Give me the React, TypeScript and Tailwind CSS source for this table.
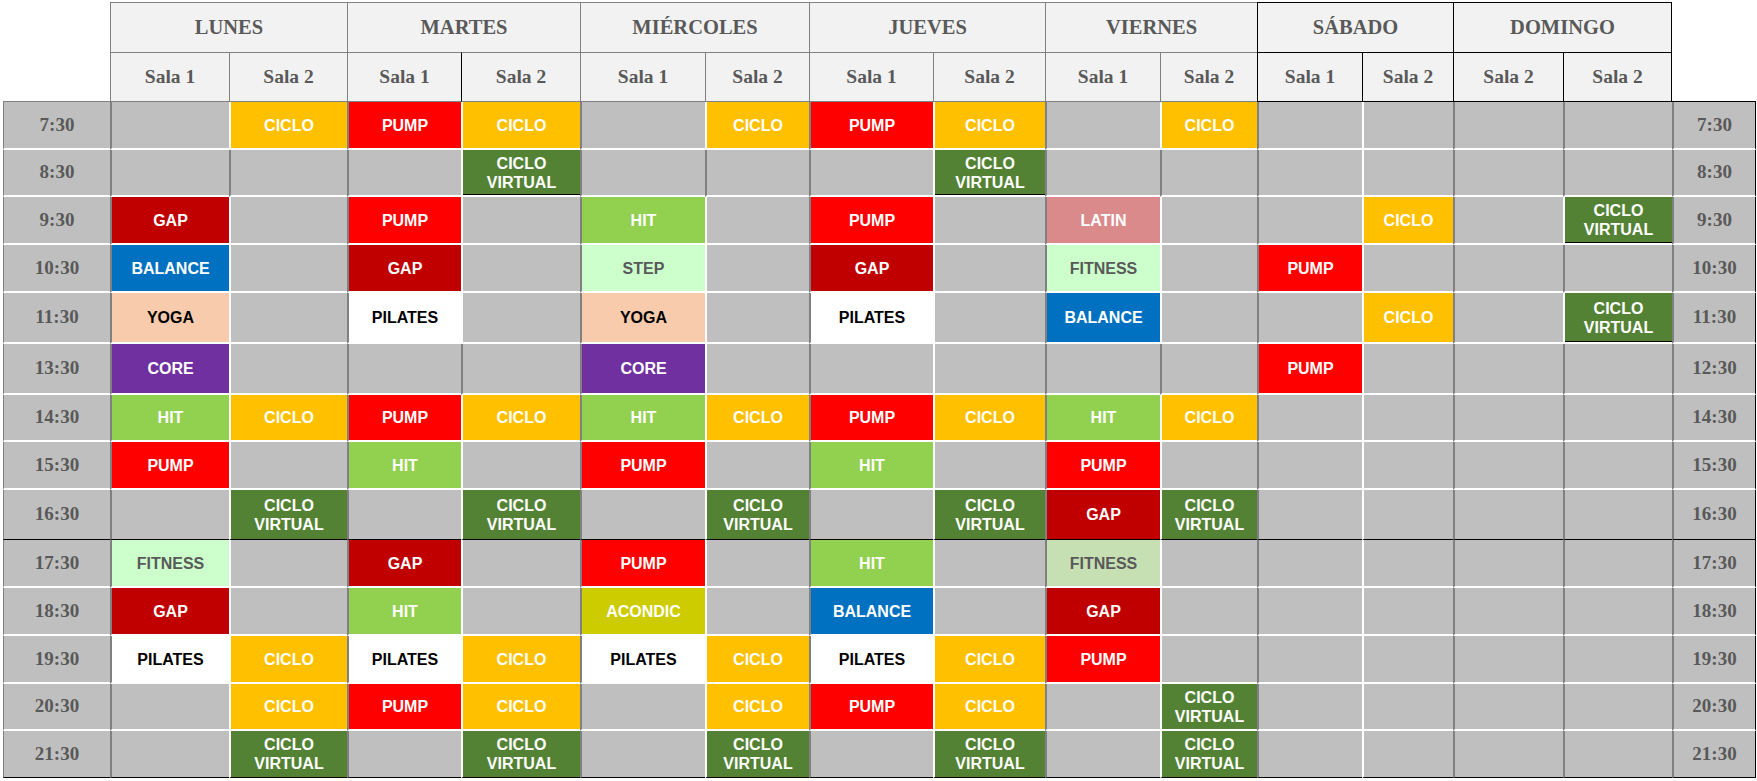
import React from "react";

type Day = { name: string; dark: boolean; salas: [string, string] };

const DAYS: Day[] = [
  { name: "LUNES", dark: false, salas: ["Sala 1", "Sala 2"] },
  { name: "MARTES", dark: false, salas: ["Sala 1", "Sala 2"] },
  { name: "MIÉRCOLES", dark: false, salas: ["Sala 1", "Sala 2"] },
  { name: "JUEVES", dark: false, salas: ["Sala 1", "Sala 2"] },
  { name: "VIERNES", dark: false, salas: ["Sala 1", "Sala 2"] },
  { name: "SÁBADO", dark: true, salas: ["Sala 1", "Sala 2"] },
  { name: "DOMINGO", dark: true, salas: ["Sala 2", "Sala 2"] },
];

const STYLES: Record<string, string> = {
  CICLO: "bg-[#ffc000] text-white",
  PUMP: "bg-[#ff0000] text-white",
  CV: "bg-[#548235] text-white",
  GAP: "bg-[#c00000] text-white",
  BALANCE: "bg-[#0070c0] text-white",
  YOGA: "bg-[#f8cbad] text-black",
  CORE: "bg-[#7030a0] text-white",
  HIT: "bg-[#92d050] text-white",
  STEP: "bg-[#ccffcc] text-[#595959]",
  FITNESS: "bg-[#ccffcc] text-[#595959]",
  FITNESS2: "bg-[#c6e0b4] text-[#595959]",
  LATIN: "bg-[#da8a8b] text-white",
  PILATES: "bg-white text-black",
  ACONDIC: "bg-[#cccc00] text-white",
};

type Row = { l: string; r: string; c: string[] };

const ROWS: Row[] = [
  { l: "7:30", r: "7:30", c: ["", "CICLO", "PUMP", "CICLO", "", "CICLO", "PUMP", "CICLO", "", "CICLO", "", "", "", ""] },
  { l: "8:30", r: "8:30", c: ["", "", "", "CV", "", "", "", "CV", "", "", "", "", "", ""] },
  { l: "9:30", r: "9:30", c: ["GAP", "", "PUMP", "", "HIT", "", "PUMP", "", "LATIN", "", "", "CICLO", "", "CV"] },
  { l: "10:30", r: "10:30", c: ["BALANCE", "", "GAP", "", "STEP", "", "GAP", "", "FITNESS", "", "PUMP", "", "", ""] },
  { l: "11:30", r: "11:30", c: ["YOGA", "", "PILATES", "", "YOGA", "", "PILATES", "", "BALANCE", "", "", "CICLO", "", "CV"] },
  { l: "13:30", r: "12:30", c: ["CORE", "", "", "", "CORE", "", "", "", "", "", "PUMP", "", "", ""] },
  { l: "14:30", r: "14:30", c: ["HIT", "CICLO", "PUMP", "CICLO", "HIT", "CICLO", "PUMP", "CICLO", "HIT", "CICLO", "", "", "", ""] },
  { l: "15:30", r: "15:30", c: ["PUMP", "", "HIT", "", "PUMP", "", "HIT", "", "PUMP", "", "", "", "", ""] },
  { l: "16:30", r: "16:30", c: ["", "CV", "", "CV", "", "CV", "", "CV", "GAP", "CV", "", "", "", ""] },
  { l: "17:30", r: "17:30", c: ["FITNESS", "", "GAP", "", "PUMP", "", "HIT", "", "FITNESS2", "", "", "", "", ""] },
  { l: "18:30", r: "18:30", c: ["GAP", "", "HIT", "", "ACONDIC", "", "BALANCE", "", "GAP", "", "", "", "", ""] },
  { l: "19:30", r: "19:30", c: ["PILATES", "CICLO", "PILATES", "CICLO", "PILATES", "CICLO", "PILATES", "CICLO", "PUMP", "", "", "", "", ""] },
  { l: "20:30", r: "20:30", c: ["", "CICLO", "PUMP", "CICLO", "", "CICLO", "PUMP", "CICLO", "", "CV", "", "", "", ""] },
  { l: "21:30", r: "21:30", c: ["", "CV", "", "CV", "", "CV", "", "CV", "", "CV", "", "", "", ""] },
];

function bottomClass(ri: number) {
  return ri === 8 || ri === 13 ? "border-b border-b-black" : "border-b-2 border-b-white";
}

function leftClass(row: string[], j: number) {
  if (j % 2 === 0) return "border-l-2 border-l-[#808080]";
  const day = j >> 1;
  if (day === 3 || day === 5) return "border-l-2 border-l-white";
  if (row[j - 1] || row[j]) return "border-l-2 border-l-white";
  return "border-l-2 border-l-[#808080]";
}

function Label({ act }: { act: string }) {
  if (act === "CV")
    return (
      <span className="flex flex-col items-center">
        <span>CICLO</span>
        <span>VIRTUAL</span>
      </span>
    );
  if (act === "FITNESS2") return <span>FITNESS</span>;
  return <span>{act}</span>;
}

export default function App() {
  return (
    <div className="min-h-screen bg-white pt-[2px] pl-[3px]">
      <div className="grid w-fit grid-cols-[107px_119px_118px_114px_119px_125px_104px_124px_112px_115px_97px_105px_91px_110px_109px_84px] grid-rows-[50px_50px_48px_47px_48px_48px_51px_51px_47px_48px_50px_48px_48px_48px_47px_47px]">
        {/* header row 1 */}
        <div />
        {DAYS.map((d, i) => (
          <div
            key={d.name}
            className={
              "col-span-2 flex items-center justify-center bg-[#f2f2f2] border-t border-l font-['Liberation_Serif',serif] font-bold text-[20.5px] text-[#595959] " +
              (d.dark ? "border-t-black border-l-black" : "border-t-[#808080] border-l-[#808080]") +
              (i === DAYS.length - 1 ? " border-r border-r-black" : "")
            }
          >
            {d.name}
          </div>
        ))}
        <div />

        {/* header row 2 */}
        <div className="border-b border-b-[#808080]" />
        {DAYS.map((d, i) =>
          d.salas.map((s, k) => {
            const leftDark = d.dark || (k === 1 && i === 1);
            return (
              <div
                key={d.name + k}
                className={
                  "flex items-center justify-center bg-[#f2f2f2] border-t border-b border-l font-['Liberation_Serif',serif] font-bold text-[19.5px] text-[#595959] " +
                  (d.dark ? "border-t-black border-b-black " : "border-t-[#808080] border-b-[#808080] ") +
                  (leftDark ? "border-l-black" : "border-l-[#808080]") +
                  (i === DAYS.length - 1 && k === 1 ? " border-r border-r-black" : "")
                }
              >
                {s}
              </div>
            );
          })
        )}
        <div className="border-b border-b-black" />

        {/* data rows */}
        {ROWS.map((row, ri) => (
          <React.Fragment key={ri}>
            <div
              className={
                "flex items-center justify-center bg-[#bfbfbf] border-l border-l-[#808080] font-['Liberation_Serif',serif] font-bold text-[19px] text-[#595959] " +
                bottomClass(ri)
              }
            >
              {row.l}
            </div>
            {row.c.map((act, j) => {
              const style = act ? STYLES[act] : "bg-[#bfbfbf]";
              const shadow =
                act === "CV" && (ri === 1 || ri === 2 || ri === 4) ? " shadow-[inset_0_-1px_0_#000]" : "";
              return (
                <div
                  key={j}
                  className={
                    "flex items-center justify-center text-center font-['Liberation_Sans',Arial,sans-serif] font-bold text-[16px] leading-[19px] " +
                    style +
                    " " +
                    leftClass(row.c, j) +
                    " " +
                    bottomClass(ri) +
                    shadow
                  }
                >
                  {act ? <Label act={act} /> : null}
                </div>
              );
            })}
            <div
              className={
                "flex items-center justify-center bg-[#bfbfbf] border-l-2 border-l-[#808080] border-r border-r-black font-['Liberation_Serif',serif] font-bold text-[19px] text-[#595959] " +
                bottomClass(ri)
              }
            >
              {row.r}
            </div>
          </React.Fragment>
        ))}
      </div>
    </div>
  );
}
